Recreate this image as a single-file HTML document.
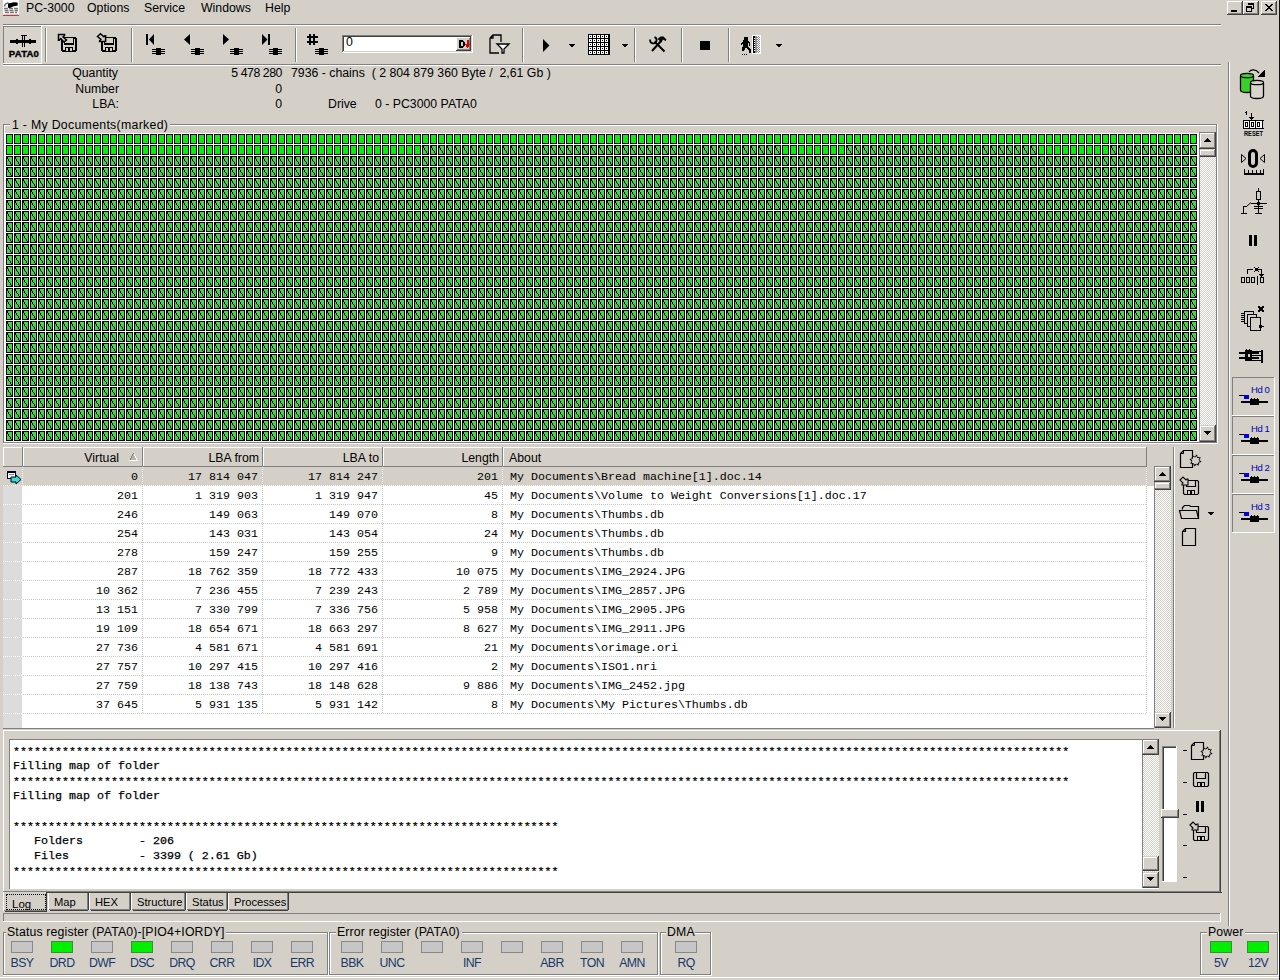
<!DOCTYPE html><html><head><meta charset="utf-8"><style>
html,body{margin:0;padding:0;}
body{width:1280px;height:980px;background:#d4d0c8;position:relative;overflow:hidden;font-family:"Liberation Sans",sans-serif;}
.t{position:absolute;white-space:pre;}
.b{position:absolute;}
.s{position:absolute;overflow:visible;}
.trk{background-color:#e8e6e2;background-image:repeating-conic-gradient(#ffffff 0 25%, #d4d0c8 0 50%);background-size:2px 2px;}
</style></head><body>
<svg class="s" style="left:3px;top:0px;" width="17" height="16" viewBox="0 0 17 16" shape-rendering="crispEdges"><rect x="0" y="0" width="16" height="14" fill="#fff"/><path d="M1.5 6.5c0-2 2-3.5 4-3.5" fill="none" stroke="#666" stroke-width="1.6" shape-rendering="auto"/><path d="M5 3.5L11 2.2 14.5 2.4 14.8 5.5 10 6.5 6.5 8.5 5 7.5z" fill="#000" shape-rendering="auto"/><path d="M1 8.5h14M1.5 10.5h13.5M2 12.5h12" stroke="#777" stroke-width="1.4" stroke-dasharray="4 1" shape-rendering="auto"/><rect x="0" y="15" width="16" height="1" fill="#c03838"/></svg><div class="t" style="left:26px;top:1.59px;font-size:12.3px;line-height:12.3px;font-family:'Liberation Sans', sans-serif;color:#000;">PC-3000</div><div class="t" style="left:87px;top:1.59px;font-size:12.3px;line-height:12.3px;font-family:'Liberation Sans', sans-serif;color:#000;">Options</div><div class="t" style="left:144px;top:1.59px;font-size:12.3px;line-height:12.3px;font-family:'Liberation Sans', sans-serif;color:#000;">Service</div><div class="t" style="left:201px;top:1.59px;font-size:12.3px;line-height:12.3px;font-family:'Liberation Sans', sans-serif;color:#000;">Windows</div><div class="t" style="left:265px;top:1.59px;font-size:12.3px;line-height:12.3px;font-family:'Liberation Sans', sans-serif;color:#000;">Help</div><div class="b" style="left:1227px;top:1px;width:16px;height:14px;background:#d4d0c8;"></div><div class="b" style="left:1227px;top:1px;width:16px;height:1px;background:#ffffff;"></div><div class="b" style="left:1227px;top:1px;width:1px;height:14px;background:#ffffff;"></div><div class="b" style="left:1227px;top:14px;width:16px;height:1px;background:#404040;"></div><div class="b" style="left:1242px;top:1px;width:1px;height:14px;background:#404040;"></div><div class="b" style="left:1228px;top:13px;width:14px;height:1px;background:#808080;"></div><div class="b" style="left:1241px;top:2px;width:1px;height:12px;background:#808080;"></div><div class="b" style="left:1231px;top:10px;width:6px;height:2px;background:#000;"></div><div class="b" style="left:1243px;top:1px;width:16px;height:14px;background:#d4d0c8;"></div><div class="b" style="left:1243px;top:1px;width:16px;height:1px;background:#ffffff;"></div><div class="b" style="left:1243px;top:1px;width:1px;height:14px;background:#ffffff;"></div><div class="b" style="left:1243px;top:14px;width:16px;height:1px;background:#404040;"></div><div class="b" style="left:1258px;top:1px;width:1px;height:14px;background:#404040;"></div><div class="b" style="left:1244px;top:13px;width:14px;height:1px;background:#808080;"></div><div class="b" style="left:1257px;top:2px;width:1px;height:12px;background:#808080;"></div><svg class="s" style="left:1246px;top:3px;" width="9" height="9" viewBox="0 0 9 9" shape-rendering="crispEdges"><path d="M2 0h6v2H2zM7 2h1v4H7zM6 5h1v1H6z" fill="#000"/><path d="M0 3h6v2H0zM0 5h1v4H0zM5 5h1v4H5zM0 8h6v1H0z" fill="#000"/></svg><div class="b" style="left:1261px;top:1px;width:16px;height:14px;background:#d4d0c8;"></div><div class="b" style="left:1261px;top:1px;width:16px;height:1px;background:#ffffff;"></div><div class="b" style="left:1261px;top:1px;width:1px;height:14px;background:#ffffff;"></div><div class="b" style="left:1261px;top:14px;width:16px;height:1px;background:#404040;"></div><div class="b" style="left:1276px;top:1px;width:1px;height:14px;background:#404040;"></div><div class="b" style="left:1262px;top:13px;width:14px;height:1px;background:#808080;"></div><div class="b" style="left:1275px;top:2px;width:1px;height:12px;background:#808080;"></div><svg class="s" style="left:1265px;top:4px;" width="8" height="7" viewBox="0 0 8 7" shape-rendering="crispEdges"><path d="M0 0h2v1h1v1h2V1h1V0h2v1H7v1H6v1H5v1h1v1h1v1h1v1H6V6H5V5H3v1H2v1H0V6h1V5h1V4h1V3H2V2H1V1H0z" fill="#000"/></svg><div class="b" style="left:1279px;top:0px;width:1px;height:980px;background:#101010;"></div><div class="b" style="left:3px;top:24px;width:1218px;height:1px;background:#808080;"></div><div class="b" style="left:3px;top:25px;width:1218px;height:1px;background:#ffffff;"></div><div class="b" style="left:3px;top:64px;width:1218px;height:1px;background:#808080;"></div><div class="b" style="left:3px;top:65px;width:1218px;height:1px;background:#ffffff;"></div><div class="b" style="left:3px;top:26px;width:39px;height:38px;background:#d8d4cc;"></div><div class="b" style="left:3px;top:26px;width:38px;height:1px;background:#808080;"></div><div class="b" style="left:3px;top:26px;width:1px;height:37px;background:#808080;"></div><div class="b" style="left:3px;top:63px;width:39px;height:1px;background:#ffffff;"></div><div class="b" style="left:41px;top:26px;width:1px;height:38px;background:#ffffff;"></div><svg class="s" style="left:9px;top:34px;" width="30" height="24" viewBox="0 0 30 24" shape-rendering="crispEdges"><path d="M1 6h26v3H1z M7 5h2v5H7z M20 5h2v5h-2z M12 1h6v1h-6z M13 1h1v12h-1z M15 1h1v12h-1z" fill="#000"/>
</svg><div class="t" style="left:4.0px;width:40px;text-align:center;top:48.87px;font-size:9.6px;line-height:9.6px;font-family:'Liberation Sans', sans-serif;color:#000;font-weight:bold;letter-spacing:0.2px;-webkit-text-stroke:0.35px #000;">PATA0</div><div class="b" style="left:45px;top:28px;width:1px;height:34px;background:#808080;"></div><div class="b" style="left:46px;top:28px;width:1px;height:34px;background:#ffffff;"></div><svg class="s" style="left:56px;top:33px;" width="24" height="22" viewBox="0 0 24 22" shape-rendering="crispEdges"><path d="M6 4h14v1h1v14h-1v1H6v-1H5V5h1z" fill="none" stroke="#000" stroke-width="0"/><path d="M6 4h14v1h1v13h-1v1H6v-1H5V5h1z M7 6v11h12V6z" fill="#000" fill-rule="evenodd"/><path d="M8 5h10v7H8z" fill="#000"/><path d="M9 5h8v5H9z" fill="#d4d0c8"/><path d="M9 14h8v4H9z" fill="#000"/><path d="M10 15h2v3H10z M14 15h2v3H14z" fill="#d4d0c8"/><path d="M2.5 1.5H8.5V2.5L7 4 10.5 7 8 9 4.8 5.6 3.3 7.3H2.5z" fill="#d4d0c8" stroke="#000" stroke-width="1.5" shape-rendering="auto"/></svg><svg class="s" style="left:95px;top:33px;" width="24" height="22" viewBox="0 0 24 22" shape-rendering="crispEdges"><path d="M7 4h14v1h1v14h-1v1H7v-1H6V5h1z" fill="none" stroke="#000" stroke-width="0"/><path d="M7 4h14v1h1v13h-1v1H7v-1H6V5h1z M8 6v11h12V6z" fill="#000" fill-rule="evenodd"/><path d="M9 5h10v7H9z" fill="#000"/><path d="M10 5h8v5H10z" fill="#d4d0c8"/><path d="M10 14h8v4H10z" fill="#000"/><path d="M11 15h2v3H11z M15 15h2v3H15z" fill="#d4d0c8"/><path d="M2.5 3.5L5.5 0.7 8.8 3.8 9.9 2.7H10.6V8.6H4.6V7.8L5.9 6.4z" fill="#d4d0c8" stroke="#000" stroke-width="1.5" shape-rendering="auto"/></svg><div class="b" style="left:131px;top:28px;width:1px;height:34px;background:#808080;"></div><div class="b" style="left:132px;top:28px;width:1px;height:34px;background:#ffffff;"></div><svg class="s" style="left:140px;top:30px;" width="40" height="28" viewBox="0 0 40 28" shape-rendering="crispEdges"><path d="M6 4h2v11H6z M9 9.5L14 4v11z" fill="#000" shape-rendering="auto"/><path d="M12 19h13v1H12z M12 21h13v1H12z M12 23h13v1H12z M16 18h5v7H16z" fill="#000"/></svg><svg class="s" style="left:179px;top:30px;" width="40" height="28" viewBox="0 0 40 28" shape-rendering="crispEdges"><path d="M5 9.5L11 4v11z" fill="#000" shape-rendering="auto"/><path d="M12 19h13v1H12z M12 21h13v1H12z M12 23h13v1H12z M16 18h5v7H16z" fill="#000"/></svg><svg class="s" style="left:218px;top:30px;" width="40" height="28" viewBox="0 0 40 28" shape-rendering="crispEdges"><path d="M5 4L11 9.5 5 15z" fill="#000" shape-rendering="auto"/><path d="M12 19h13v1H12z M12 21h13v1H12z M12 23h13v1H12z M16 18h5v7H16z" fill="#000"/></svg><svg class="s" style="left:257px;top:30px;" width="40" height="28" viewBox="0 0 40 28" shape-rendering="crispEdges"><path d="M5 4L10.5 9.5 5 15z M11 4h2v11h-2z" fill="#000" shape-rendering="auto"/><path d="M12 19h13v1H12z M12 21h13v1H12z M12 23h13v1H12z M16 18h5v7H16z" fill="#000"/></svg><div class="b" style="left:295px;top:28px;width:1px;height:34px;background:#808080;"></div><div class="b" style="left:296px;top:28px;width:1px;height:34px;background:#ffffff;"></div><svg class="s" style="left:300px;top:30px;" width="40" height="28" viewBox="0 0 40 28" shape-rendering="crispEdges"><path d="M9 4h2v11H9z M13 4h2v11h-2z M7 6h11v2H7z M7 11h11v2H7z" fill="#000"/><path d="M15 19h13v1H15z M15 21h13v1H15z M15 23h13v1H15z M19 18h5v7H19z" fill="#000"/></svg><div class="b" style="left:342px;top:35px;width:131px;height:18px;background:#ffffff;"></div><div class="b" style="left:342px;top:35px;width:131px;height:1px;background:#808080;"></div><div class="b" style="left:342px;top:35px;width:1px;height:18px;background:#808080;"></div><div class="b" style="left:343px;top:36px;width:129px;height:1px;background:#404040;"></div><div class="b" style="left:343px;top:36px;width:1px;height:16px;background:#404040;"></div><div class="b" style="left:342px;top:52px;width:131px;height:1px;background:#ffffff;"></div><div class="b" style="left:472px;top:35px;width:1px;height:18px;background:#ffffff;"></div><div class="b" style="left:343px;top:51px;width:129px;height:1px;background:#d4d0c8;"></div><div class="b" style="left:471px;top:36px;width:1px;height:16px;background:#d4d0c8;"></div><div class="t" style="left:346px;top:36.09px;font-size:12.3px;line-height:12.3px;font-family:'Liberation Sans', sans-serif;color:#000;">0</div><div class="b" style="left:456px;top:37px;width:15px;height:14px;background:#d4d0c8;"></div><div class="b" style="left:456px;top:37px;width:15px;height:1px;background:#ffffff;"></div><div class="b" style="left:456px;top:37px;width:1px;height:14px;background:#ffffff;"></div><div class="b" style="left:456px;top:50px;width:15px;height:1px;background:#404040;"></div><div class="b" style="left:470px;top:37px;width:1px;height:14px;background:#404040;"></div><div class="b" style="left:457px;top:49px;width:13px;height:1px;background:#808080;"></div><div class="b" style="left:469px;top:38px;width:1px;height:12px;background:#808080;"></div><svg class="s" style="left:459px;top:39px;" width="12" height="10" viewBox="0 0 12 10" shape-rendering="crispEdges"><path d="M0 1h4v1h1v1h1v4H5v1H4v1H0z M2 3v4h1.5V3z" fill="#000" fill-rule="evenodd"/><path d="M7.5 1h2v4h2L8.5 9 5.5 5h2z" fill="#e00000"/></svg><svg class="s" style="left:487px;top:34px;" width="26" height="22" viewBox="0 0 26 22" shape-rendering="crispEdges"><path d="M3 4l3-3h8v7 M3 4v15h9 M3 4h3V1" fill="none" stroke="#000" stroke-width="1.3" shape-rendering="auto"/><path d="M10 10h12l-5 5v4h-2v-4z" fill="#fff" stroke="#000" stroke-width="1.3" shape-rendering="auto" stroke-linejoin="miter"/></svg><div class="b" style="left:522px;top:28px;width:1px;height:34px;background:#808080;"></div><div class="b" style="left:523px;top:28px;width:1px;height:34px;background:#ffffff;"></div><svg class="s" style="left:540px;top:36px;" width="14" height="18" viewBox="0 0 14 18" shape-rendering="crispEdges"><path d="M3 3L9.5 9.5 3 16z" fill="#000" shape-rendering="auto"/></svg><svg class="s" style="left:569px;top:44px;" width="6" height="3" viewBox="0 0 6 3" shape-rendering="crispEdges"><path d="M0 0h6v1H5v1H4v1H2V2H1V1H0z" fill="#000"/></svg><svg class="s" style="left:588px;top:34px;" width="22" height="21" viewBox="0 0 22 21" shape-rendering="crispEdges"><rect x="0" y="0" width="22" height="21" fill="#000"/><rect x="1.3" y="1" width="3" height="3" fill="#fff"/><rect x="2" y="2" width="1" height="1" fill="#000"/><rect x="1.3" y="5" width="3" height="3" fill="#fff"/><rect x="2" y="6" width="1" height="1" fill="#000"/><rect x="1.3" y="9" width="3" height="3" fill="#fff"/><rect x="2" y="10" width="1" height="1" fill="#000"/><rect x="1.3" y="13" width="3" height="3" fill="#fff"/><rect x="2" y="14" width="1" height="1" fill="#000"/><rect x="1.3" y="17" width="3" height="3" fill="#fff"/><rect x="2" y="18" width="1" height="1" fill="#000"/><rect x="5.3" y="1" width="3" height="3" fill="#fff"/><rect x="6" y="2" width="1" height="1" fill="#000"/><rect x="5.3" y="5" width="3" height="3" fill="#fff"/><rect x="6" y="6" width="1" height="1" fill="#000"/><rect x="5.3" y="9" width="3" height="3" fill="#fff"/><rect x="6" y="10" width="1" height="1" fill="#000"/><rect x="5.3" y="13" width="3" height="3" fill="#fff"/><rect x="6" y="14" width="1" height="1" fill="#000"/><rect x="5.3" y="17" width="3" height="3" fill="#fff"/><rect x="6" y="18" width="1" height="1" fill="#000"/><rect x="9.3" y="1" width="3" height="3" fill="#fff"/><rect x="10" y="2" width="1" height="1" fill="#000"/><rect x="9.3" y="5" width="3" height="3" fill="#fff"/><rect x="10" y="6" width="1" height="1" fill="#000"/><rect x="9.3" y="9" width="3" height="3" fill="#fff"/><rect x="10" y="10" width="1" height="1" fill="#000"/><rect x="9.3" y="13" width="3" height="3" fill="#fff"/><rect x="10" y="14" width="1" height="1" fill="#000"/><rect x="9.3" y="17" width="3" height="3" fill="#fff"/><rect x="10" y="18" width="1" height="1" fill="#000"/><rect x="13.3" y="1" width="3" height="3" fill="#fff"/><rect x="14" y="2" width="1" height="1" fill="#000"/><rect x="13.3" y="5" width="3" height="3" fill="#fff"/><rect x="14" y="6" width="1" height="1" fill="#000"/><rect x="13.3" y="9" width="3" height="3" fill="#fff"/><rect x="14" y="10" width="1" height="1" fill="#000"/><rect x="13.3" y="13" width="3" height="3" fill="#fff"/><rect x="14" y="14" width="1" height="1" fill="#000"/><rect x="13.3" y="17" width="3" height="3" fill="#fff"/><rect x="14" y="18" width="1" height="1" fill="#000"/><rect x="17.3" y="1" width="3" height="3" fill="#fff"/><rect x="18" y="2" width="1" height="1" fill="#000"/><rect x="17.3" y="5" width="3" height="3" fill="#fff"/><rect x="18" y="6" width="1" height="1" fill="#000"/><rect x="17.3" y="9" width="3" height="3" fill="#fff"/><rect x="18" y="10" width="1" height="1" fill="#000"/><rect x="17.3" y="13" width="3" height="3" fill="#fff"/><rect x="18" y="14" width="1" height="1" fill="#000"/><rect x="17.3" y="17" width="3" height="3" fill="#fff"/><rect x="18" y="18" width="1" height="1" fill="#000"/></svg><svg class="s" style="left:622px;top:44px;" width="6" height="3" viewBox="0 0 6 3" shape-rendering="crispEdges"><path d="M0 0h6v1H5v1H4v1H2V2H1V1H0z" fill="#000"/></svg><div class="b" style="left:634px;top:28px;width:1px;height:34px;background:#808080;"></div><div class="b" style="left:635px;top:28px;width:1px;height:34px;background:#ffffff;"></div><svg class="s" style="left:649px;top:36px;" width="20" height="18" viewBox="0 0 20 18" shape-rendering="crispEdges"><path d="M5.5 5.5L15.5 15.5 M12 5L3 15" stroke="#000" stroke-width="2" fill="none" shape-rendering="auto"/><path d="M1.2 3.5A3.2 3.2 0 1 0 5.5 1.2" stroke="#000" stroke-width="1.8" fill="none" shape-rendering="auto"/><path d="M8.5 3L11.5 0.5H14.5L17.5 3.5 16.5 5 14 3.5 12.5 6.5z" fill="#000" shape-rendering="auto"/></svg><div class="b" style="left:681px;top:28px;width:1px;height:34px;background:#808080;"></div><div class="b" style="left:682px;top:28px;width:1px;height:34px;background:#ffffff;"></div><div class="b" style="left:700px;top:41px;width:10px;height:9px;background:#000;"></div><div class="b" style="left:728px;top:28px;width:1px;height:34px;background:#808080;"></div><div class="b" style="left:729px;top:28px;width:1px;height:34px;background:#ffffff;"></div><svg class="s" style="left:740px;top:34px;" width="24" height="22" viewBox="0 0 24 22" shape-rendering="crispEdges"><defs><pattern id="dth" width="2" height="2" patternUnits="userSpaceOnUse"><rect width="2" height="2" fill="#fff"/><rect width="1" height="1" fill="#888"/><rect x="1" y="1" width="1" height="1" fill="#888"/></pattern></defs>
<path d="M4 3h4v3H4z M3 6h5v1h1v1h1v4H9V9H8v4h1v1h1v1h1v4H9v-3H8v-1H7v-1H5v2H4v1H2v-4h1v-3H2v1H1V9h1V8h1z" fill="#000"/>
<path d="M2 20h1v1H2z M4 20h1v1H4z M6 20h1v1H6z" fill="#000"/>
<rect x="12" y="1" width="9" height="19" fill="#fff"/>
<rect x="13" y="2" width="2" height="17" fill="#000"/><rect x="15" y="2" width="2" height="17" fill="#909090"/><rect x="17" y="2" width="3" height="17" fill="url(#dth)"/>
<path d="M14 4h1v1h-1z M14 6h1v1h-1z M14 8h1v1h-1z M14 10h1v1h-1z M14 12h1v1h-1z M14 14h1v1h-1z M14 16h1v1h-1z" fill="#fff"/>
</svg><svg class="s" style="left:776px;top:44px;" width="6" height="3" viewBox="0 0 6 3" shape-rendering="crispEdges"><path d="M0 0h6v1H5v1H4v1H2V2H1V1H0z" fill="#000"/></svg><div class="t" style="left:-282px;width:400px;text-align:right;top:66.59px;font-size:12.3px;line-height:12.3px;font-family:'Liberation Sans', sans-serif;color:#000;">Quantity</div><div class="t" style="left:-281px;width:400px;text-align:right;top:82.59px;font-size:12.3px;line-height:12.3px;font-family:'Liberation Sans', sans-serif;color:#000;">Number</div><div class="t" style="left:-281px;width:400px;text-align:right;top:97.59px;font-size:12.3px;line-height:12.3px;font-family:'Liberation Sans', sans-serif;color:#000;">LBA:</div><div class="t" style="left:-118px;width:400px;text-align:right;top:66.59px;font-size:12.3px;line-height:12.3px;font-family:'Liberation Sans', sans-serif;color:#000;letter-spacing:-0.45px;">5 478 280</div><div class="t" style="left:-118px;width:400px;text-align:right;top:82.59px;font-size:12.3px;line-height:12.3px;font-family:'Liberation Sans', sans-serif;color:#000;">0</div><div class="t" style="left:-118px;width:400px;text-align:right;top:97.59px;font-size:12.3px;line-height:12.3px;font-family:'Liberation Sans', sans-serif;color:#000;">0</div><div class="t" style="left:291px;top:66.59px;font-size:12.3px;line-height:12.3px;font-family:'Liberation Sans', sans-serif;color:#000;">7936 - chains  ( 2 804 879 360 Byte /  2,61 Gb )</div><div class="t" style="left:328px;top:97.59px;font-size:12.3px;line-height:12.3px;font-family:'Liberation Sans', sans-serif;color:#000;">Drive</div><div class="t" style="left:375px;top:97.59px;font-size:12.3px;line-height:12.3px;font-family:'Liberation Sans', sans-serif;color:#000;">0 - PC3000 PATA0</div><div class="b" style="left:3px;top:124px;width:1214px;height:1px;background:#808080;"></div><div class="b" style="left:4px;top:125px;width:1212px;height:1px;background:#ffffff;"></div><div class="b" style="left:3px;top:124px;width:1px;height:319px;background:#808080;"></div><div class="b" style="left:4px;top:125px;width:1px;height:317px;background:#ffffff;"></div><div class="b" style="left:3px;top:442px;width:1214px;height:1px;background:#808080;"></div><div class="b" style="left:3px;top:443px;width:1215px;height:1px;background:#ffffff;"></div><div class="b" style="left:1216px;top:124px;width:1px;height:319px;background:#808080;"></div><div class="b" style="left:1217px;top:124px;width:1px;height:320px;background:#ffffff;"></div><div class="b" style="left:10px;top:117px;width:160px;height:14px;background:#d4d0c8;"></div><div class="t" style="left:12px;top:118.59px;font-size:12.3px;line-height:12.3px;font-family:'Liberation Sans', sans-serif;color:#000;letter-spacing:0.3px;">1 - My Documents(marked)</div><div class="b" style="left:5px;top:133px;width:1194px;height:309px;background:#ffffff;"></div><svg class="s" style="left:6px;top:134px;" width="1191" height="307" viewBox="0 0 1191 307" shape-rendering="crispEdges"><defs>
<pattern id="pp" x="0" y="0" width="8" height="11" patternUnits="userSpaceOnUse"><rect x="0" y="0" width="7" height="10" fill="#000"/><rect x="1" y="1" width="5" height="8" fill="#08f008"/></pattern>
<pattern id="pd" x="0" y="0" width="8" height="11" patternUnits="userSpaceOnUse"><rect x="0" y="0" width="7" height="10" fill="#000"/><rect x="1" y="1" width="5" height="8" fill="#40d840"/><path d="M1 1h1v2H1z M2 3h1v2H2z M3 5h1v1H3z M4 6h1v2H4z M5 8h1v1H5z" fill="#000"/></pattern>
</defs>
<rect x="0" y="0" width="1192" height="11" fill="url(#pp)"/>
<rect x="0" y="11" width="1192" height="11" fill="url(#pd)"/>
<rect x="0" y="11" width="416" height="11" fill="url(#pp)"/>
<rect x="776" y="11" width="64" height="11" fill="url(#pp)"/>
<rect x="1032" y="11" width="72" height="11" fill="url(#pp)"/>
<rect x="0" y="22" width="1192" height="286" fill="url(#pd)"/></svg><div class="b trk" style="left:1199px;top:132px;width:17px;height:310px;"></div><div class="b" style="left:1199px;top:132px;width:1px;height:310px;background:#808080;"></div><div class="b" style="left:1199px;top:132px;width:17px;height:17px;background:#d4d0c8;"></div><div class="b" style="left:1199px;top:132px;width:17px;height:1px;background:#808080;"></div><div class="b" style="left:1199px;top:132px;width:1px;height:17px;background:#808080;"></div><div class="b" style="left:1200px;top:133px;width:15px;height:1px;background:#ffffff;"></div><div class="b" style="left:1200px;top:133px;width:1px;height:15px;background:#ffffff;"></div><div class="b" style="left:1200px;top:147px;width:15px;height:1px;background:#808080;"></div><div class="b" style="left:1214px;top:133px;width:1px;height:15px;background:#808080;"></div><div class="b" style="left:1199px;top:148px;width:17px;height:1px;background:#404040;"></div><div class="b" style="left:1215px;top:132px;width:1px;height:17px;background:#404040;"></div><svg class="s" style="left:1204px;top:138px;" width="7" height="4" viewBox="0 0 7 4" shape-rendering="crispEdges"><path d="M3 0h1v1h1v1h1v1h1v1H0V3h1V2h1V1h1z" fill="#000"/></svg><div class="b" style="left:1199px;top:425px;width:17px;height:17px;background:#d4d0c8;"></div><div class="b" style="left:1200px;top:426px;width:15px;height:1px;background:#ffffff;"></div><div class="b" style="left:1200px;top:426px;width:1px;height:15px;background:#ffffff;"></div><div class="b" style="left:1200px;top:440px;width:15px;height:1px;background:#808080;"></div><div class="b" style="left:1214px;top:426px;width:1px;height:15px;background:#808080;"></div><div class="b" style="left:1199px;top:441px;width:17px;height:1px;background:#404040;"></div><div class="b" style="left:1215px;top:425px;width:1px;height:17px;background:#404040;"></div><svg class="s" style="left:1204px;top:431px;" width="7" height="4" viewBox="0 0 7 4" shape-rendering="crispEdges"><path d="M0 0h7v1h-1v1h-1v1h-1v1h-1V3H2V2H1V1H0z" fill="#000"/></svg><div class="b" style="left:1199px;top:425px;width:1px;height:17px;background:#808080;"></div><div class="b" style="left:1199px;top:149px;width:17px;height:8px;background:#d4d0c8;"></div><div class="b" style="left:1200px;top:150px;width:15px;height:1px;background:#ffffff;"></div><div class="b" style="left:1200px;top:150px;width:1px;height:6px;background:#ffffff;"></div><div class="b" style="left:1200px;top:155px;width:15px;height:1px;background:#808080;"></div><div class="b" style="left:1214px;top:150px;width:1px;height:6px;background:#808080;"></div><div class="b" style="left:1199px;top:156px;width:17px;height:1px;background:#404040;"></div><div class="b" style="left:1215px;top:149px;width:1px;height:8px;background:#404040;"></div><div class="b" style="left:1199px;top:149px;width:1px;height:8px;background:#808080;"></div><div class="b" style="left:3px;top:447px;width:1151px;height:282px;background:#ffffff;"></div><div class="b" style="left:3px;top:447px;width:20px;height:20px;background:#d4d0c8;"></div><div class="b" style="left:3px;top:447px;width:20px;height:1px;background:#ffffff;"></div><div class="b" style="left:3px;top:447px;width:1px;height:20px;background:#ffffff;"></div><div class="b" style="left:22px;top:447px;width:1px;height:20px;background:#808080;"></div><div class="b" style="left:23px;top:447px;width:120px;height:20px;background:#d4d0c8;"></div><div class="b" style="left:23px;top:447px;width:120px;height:1px;background:#ffffff;"></div><div class="b" style="left:23px;top:447px;width:1px;height:20px;background:#ffffff;"></div><div class="b" style="left:142px;top:447px;width:1px;height:20px;background:#808080;"></div><div class="b" style="left:143px;top:447px;width:120px;height:20px;background:#d4d0c8;"></div><div class="b" style="left:143px;top:447px;width:120px;height:1px;background:#ffffff;"></div><div class="b" style="left:143px;top:447px;width:1px;height:20px;background:#ffffff;"></div><div class="b" style="left:262px;top:447px;width:1px;height:20px;background:#808080;"></div><div class="b" style="left:263px;top:447px;width:120px;height:20px;background:#d4d0c8;"></div><div class="b" style="left:263px;top:447px;width:120px;height:1px;background:#ffffff;"></div><div class="b" style="left:263px;top:447px;width:1px;height:20px;background:#ffffff;"></div><div class="b" style="left:382px;top:447px;width:1px;height:20px;background:#808080;"></div><div class="b" style="left:383px;top:447px;width:120px;height:20px;background:#d4d0c8;"></div><div class="b" style="left:383px;top:447px;width:120px;height:1px;background:#ffffff;"></div><div class="b" style="left:383px;top:447px;width:1px;height:20px;background:#ffffff;"></div><div class="b" style="left:502px;top:447px;width:1px;height:20px;background:#808080;"></div><div class="b" style="left:503px;top:447px;width:644px;height:20px;background:#d4d0c8;"></div><div class="b" style="left:503px;top:447px;width:644px;height:1px;background:#ffffff;"></div><div class="b" style="left:503px;top:447px;width:1px;height:20px;background:#ffffff;"></div><div class="b" style="left:1146px;top:447px;width:1px;height:20px;background:#808080;"></div><div class="b" style="left:3px;top:466px;width:1144px;height:1px;background:#808080;"></div><div class="b" style="left:1147px;top:447px;width:7px;height:20px;background:#d4d0c8;"></div><div class="t" style="left:-281px;width:400px;text-align:right;top:451.59px;font-size:12.3px;line-height:12.3px;font-family:'Liberation Sans', sans-serif;color:#000;">Virtual</div><div class="t" style="left:-141px;width:400px;text-align:right;top:451.59px;font-size:12.3px;line-height:12.3px;font-family:'Liberation Sans', sans-serif;color:#000;">LBA from</div><div class="t" style="left:-21px;width:400px;text-align:right;top:451.59px;font-size:12.3px;line-height:12.3px;font-family:'Liberation Sans', sans-serif;color:#000;">LBA to</div><div class="t" style="left:99px;width:400px;text-align:right;top:451.59px;font-size:12.3px;line-height:12.3px;font-family:'Liberation Sans', sans-serif;color:#000;">Length</div><div class="t" style="left:509px;top:451.59px;font-size:12.3px;line-height:12.3px;font-family:'Liberation Sans', sans-serif;color:#000;">About</div><svg class="s" style="left:129px;top:453px;" width="9" height="8" viewBox="0 0 9 8" shape-rendering="crispEdges"><path d="M4 0h1v1h1v2h1v2h1v2H1V5h1V3h1V1h1z" fill="#b8b4ac"/><path d="M4 0h1v1H4zM3 1h1v2H3zM2 3h1v2H2zM1 5h1v2H1z" fill="#808080"/><path d="M0 7h9v1H0zM5 1h1v2H5zM6 3h1v2H6zM7 5h1v2H7z" fill="#ffffff"/></svg><div class="b" style="left:3px;top:467px;width:19px;height:261px;background:#dcdcdc;"></div><div class="b" style="left:3px;top:467px;width:1144px;height:19px;background:#d4d0c8;"></div><div class="b" style="left:1147px;top:447px;width:7px;height:39px;background:#d4d0c8;"></div><div class="b" style="left:3px;top:485px;width:1144px;height:1px;background:repeating-linear-gradient(90deg,#ffffff 0 1px,transparent 1px 2px);"></div><div class="b" style="left:3px;top:485px;width:19px;height:1px;background:repeating-linear-gradient(90deg,#ffffff 0 1px,transparent 1px 2px);"></div><div class="b" style="left:3px;top:504px;width:1144px;height:1px;background:repeating-linear-gradient(90deg,#c8c8c8 0 1px,transparent 1px 2px);"></div><div class="b" style="left:3px;top:504px;width:19px;height:1px;background:repeating-linear-gradient(90deg,#ffffff 0 1px,transparent 1px 2px);"></div><div class="b" style="left:3px;top:523px;width:1144px;height:1px;background:repeating-linear-gradient(90deg,#c8c8c8 0 1px,transparent 1px 2px);"></div><div class="b" style="left:3px;top:523px;width:19px;height:1px;background:repeating-linear-gradient(90deg,#ffffff 0 1px,transparent 1px 2px);"></div><div class="b" style="left:3px;top:542px;width:1144px;height:1px;background:repeating-linear-gradient(90deg,#c8c8c8 0 1px,transparent 1px 2px);"></div><div class="b" style="left:3px;top:542px;width:19px;height:1px;background:repeating-linear-gradient(90deg,#ffffff 0 1px,transparent 1px 2px);"></div><div class="b" style="left:3px;top:561px;width:1144px;height:1px;background:repeating-linear-gradient(90deg,#c8c8c8 0 1px,transparent 1px 2px);"></div><div class="b" style="left:3px;top:561px;width:19px;height:1px;background:repeating-linear-gradient(90deg,#ffffff 0 1px,transparent 1px 2px);"></div><div class="b" style="left:3px;top:580px;width:1144px;height:1px;background:repeating-linear-gradient(90deg,#c8c8c8 0 1px,transparent 1px 2px);"></div><div class="b" style="left:3px;top:580px;width:19px;height:1px;background:repeating-linear-gradient(90deg,#ffffff 0 1px,transparent 1px 2px);"></div><div class="b" style="left:3px;top:599px;width:1144px;height:1px;background:repeating-linear-gradient(90deg,#c8c8c8 0 1px,transparent 1px 2px);"></div><div class="b" style="left:3px;top:599px;width:19px;height:1px;background:repeating-linear-gradient(90deg,#ffffff 0 1px,transparent 1px 2px);"></div><div class="b" style="left:3px;top:618px;width:1144px;height:1px;background:repeating-linear-gradient(90deg,#c8c8c8 0 1px,transparent 1px 2px);"></div><div class="b" style="left:3px;top:618px;width:19px;height:1px;background:repeating-linear-gradient(90deg,#ffffff 0 1px,transparent 1px 2px);"></div><div class="b" style="left:3px;top:637px;width:1144px;height:1px;background:repeating-linear-gradient(90deg,#c8c8c8 0 1px,transparent 1px 2px);"></div><div class="b" style="left:3px;top:637px;width:19px;height:1px;background:repeating-linear-gradient(90deg,#ffffff 0 1px,transparent 1px 2px);"></div><div class="b" style="left:3px;top:656px;width:1144px;height:1px;background:repeating-linear-gradient(90deg,#c8c8c8 0 1px,transparent 1px 2px);"></div><div class="b" style="left:3px;top:656px;width:19px;height:1px;background:repeating-linear-gradient(90deg,#ffffff 0 1px,transparent 1px 2px);"></div><div class="b" style="left:3px;top:675px;width:1144px;height:1px;background:repeating-linear-gradient(90deg,#c8c8c8 0 1px,transparent 1px 2px);"></div><div class="b" style="left:3px;top:675px;width:19px;height:1px;background:repeating-linear-gradient(90deg,#ffffff 0 1px,transparent 1px 2px);"></div><div class="b" style="left:3px;top:694px;width:1144px;height:1px;background:repeating-linear-gradient(90deg,#c8c8c8 0 1px,transparent 1px 2px);"></div><div class="b" style="left:3px;top:694px;width:19px;height:1px;background:repeating-linear-gradient(90deg,#ffffff 0 1px,transparent 1px 2px);"></div><div class="b" style="left:3px;top:713px;width:1144px;height:1px;background:repeating-linear-gradient(90deg,#c8c8c8 0 1px,transparent 1px 2px);"></div><div class="b" style="left:3px;top:713px;width:19px;height:1px;background:repeating-linear-gradient(90deg,#ffffff 0 1px,transparent 1px 2px);"></div><div class="b" style="left:22px;top:467px;width:1px;height:18px;background:repeating-linear-gradient(180deg,#ffffff 0 1px,transparent 1px 2px);"></div><div class="b" style="left:22px;top:486px;width:1px;height:228px;background:repeating-linear-gradient(180deg,#ffffff 0 1px,transparent 1px 2px);"></div><div class="b" style="left:142px;top:467px;width:1px;height:18px;background:repeating-linear-gradient(180deg,#ffffff 0 1px,transparent 1px 2px);"></div><div class="b" style="left:142px;top:486px;width:1px;height:228px;background:repeating-linear-gradient(180deg,#c8c8c8 0 1px,transparent 1px 2px);"></div><div class="b" style="left:262px;top:467px;width:1px;height:18px;background:repeating-linear-gradient(180deg,#ffffff 0 1px,transparent 1px 2px);"></div><div class="b" style="left:262px;top:486px;width:1px;height:228px;background:repeating-linear-gradient(180deg,#c8c8c8 0 1px,transparent 1px 2px);"></div><div class="b" style="left:382px;top:467px;width:1px;height:18px;background:repeating-linear-gradient(180deg,#ffffff 0 1px,transparent 1px 2px);"></div><div class="b" style="left:382px;top:486px;width:1px;height:228px;background:repeating-linear-gradient(180deg,#c8c8c8 0 1px,transparent 1px 2px);"></div><div class="b" style="left:502px;top:467px;width:1px;height:18px;background:repeating-linear-gradient(180deg,#ffffff 0 1px,transparent 1px 2px);"></div><div class="b" style="left:502px;top:486px;width:1px;height:228px;background:repeating-linear-gradient(180deg,#c8c8c8 0 1px,transparent 1px 2px);"></div><div class="b" style="left:1146px;top:467px;width:1px;height:19px;background:repeating-linear-gradient(180deg,#ffffff 0 1px,transparent 1px 2px);"></div><div class="b" style="left:1146px;top:486px;width:1px;height:228px;background:repeating-linear-gradient(180deg,#c8c8c8 0 1px,transparent 1px 2px);"></div><div class="t" style="left:-262px;width:400px;text-align:right;top:472.05px;font-size:11.67px;line-height:11.67px;font-family:'Liberation Mono', monospace;color:#000;">0</div><div class="t" style="left:-142px;width:400px;text-align:right;top:472.05px;font-size:11.67px;line-height:11.67px;font-family:'Liberation Mono', monospace;color:#000;">17 814 047</div><div class="t" style="left:-22px;width:400px;text-align:right;top:472.05px;font-size:11.67px;line-height:11.67px;font-family:'Liberation Mono', monospace;color:#000;">17 814 247</div><div class="t" style="left:98px;width:400px;text-align:right;top:472.05px;font-size:11.67px;line-height:11.67px;font-family:'Liberation Mono', monospace;color:#000;">201</div><div class="t" style="left:510px;top:472.05px;font-size:11.67px;line-height:11.67px;font-family:'Liberation Mono', monospace;color:#000;">My Documents\Bread machine[1].doc.14</div><div class="t" style="left:-262px;width:400px;text-align:right;top:491.05px;font-size:11.67px;line-height:11.67px;font-family:'Liberation Mono', monospace;color:#000;">201</div><div class="t" style="left:-142px;width:400px;text-align:right;top:491.05px;font-size:11.67px;line-height:11.67px;font-family:'Liberation Mono', monospace;color:#000;">1 319 903</div><div class="t" style="left:-22px;width:400px;text-align:right;top:491.05px;font-size:11.67px;line-height:11.67px;font-family:'Liberation Mono', monospace;color:#000;">1 319 947</div><div class="t" style="left:98px;width:400px;text-align:right;top:491.05px;font-size:11.67px;line-height:11.67px;font-family:'Liberation Mono', monospace;color:#000;">45</div><div class="t" style="left:510px;top:491.05px;font-size:11.67px;line-height:11.67px;font-family:'Liberation Mono', monospace;color:#000;">My Documents\Volume to Weight Conversions[1].doc.17</div><div class="t" style="left:-262px;width:400px;text-align:right;top:510.05px;font-size:11.67px;line-height:11.67px;font-family:'Liberation Mono', monospace;color:#000;">246</div><div class="t" style="left:-142px;width:400px;text-align:right;top:510.05px;font-size:11.67px;line-height:11.67px;font-family:'Liberation Mono', monospace;color:#000;">149 063</div><div class="t" style="left:-22px;width:400px;text-align:right;top:510.05px;font-size:11.67px;line-height:11.67px;font-family:'Liberation Mono', monospace;color:#000;">149 070</div><div class="t" style="left:98px;width:400px;text-align:right;top:510.05px;font-size:11.67px;line-height:11.67px;font-family:'Liberation Mono', monospace;color:#000;">8</div><div class="t" style="left:510px;top:510.05px;font-size:11.67px;line-height:11.67px;font-family:'Liberation Mono', monospace;color:#000;">My Documents\Thumbs.db</div><div class="t" style="left:-262px;width:400px;text-align:right;top:529.05px;font-size:11.67px;line-height:11.67px;font-family:'Liberation Mono', monospace;color:#000;">254</div><div class="t" style="left:-142px;width:400px;text-align:right;top:529.05px;font-size:11.67px;line-height:11.67px;font-family:'Liberation Mono', monospace;color:#000;">143 031</div><div class="t" style="left:-22px;width:400px;text-align:right;top:529.05px;font-size:11.67px;line-height:11.67px;font-family:'Liberation Mono', monospace;color:#000;">143 054</div><div class="t" style="left:98px;width:400px;text-align:right;top:529.05px;font-size:11.67px;line-height:11.67px;font-family:'Liberation Mono', monospace;color:#000;">24</div><div class="t" style="left:510px;top:529.05px;font-size:11.67px;line-height:11.67px;font-family:'Liberation Mono', monospace;color:#000;">My Documents\Thumbs.db</div><div class="t" style="left:-262px;width:400px;text-align:right;top:548.05px;font-size:11.67px;line-height:11.67px;font-family:'Liberation Mono', monospace;color:#000;">278</div><div class="t" style="left:-142px;width:400px;text-align:right;top:548.05px;font-size:11.67px;line-height:11.67px;font-family:'Liberation Mono', monospace;color:#000;">159 247</div><div class="t" style="left:-22px;width:400px;text-align:right;top:548.05px;font-size:11.67px;line-height:11.67px;font-family:'Liberation Mono', monospace;color:#000;">159 255</div><div class="t" style="left:98px;width:400px;text-align:right;top:548.05px;font-size:11.67px;line-height:11.67px;font-family:'Liberation Mono', monospace;color:#000;">9</div><div class="t" style="left:510px;top:548.05px;font-size:11.67px;line-height:11.67px;font-family:'Liberation Mono', monospace;color:#000;">My Documents\Thumbs.db</div><div class="t" style="left:-262px;width:400px;text-align:right;top:567.05px;font-size:11.67px;line-height:11.67px;font-family:'Liberation Mono', monospace;color:#000;">287</div><div class="t" style="left:-142px;width:400px;text-align:right;top:567.05px;font-size:11.67px;line-height:11.67px;font-family:'Liberation Mono', monospace;color:#000;">18 762 359</div><div class="t" style="left:-22px;width:400px;text-align:right;top:567.05px;font-size:11.67px;line-height:11.67px;font-family:'Liberation Mono', monospace;color:#000;">18 772 433</div><div class="t" style="left:98px;width:400px;text-align:right;top:567.05px;font-size:11.67px;line-height:11.67px;font-family:'Liberation Mono', monospace;color:#000;">10 075</div><div class="t" style="left:510px;top:567.05px;font-size:11.67px;line-height:11.67px;font-family:'Liberation Mono', monospace;color:#000;">My Documents\IMG_2924.JPG</div><div class="t" style="left:-262px;width:400px;text-align:right;top:586.05px;font-size:11.67px;line-height:11.67px;font-family:'Liberation Mono', monospace;color:#000;">10 362</div><div class="t" style="left:-142px;width:400px;text-align:right;top:586.05px;font-size:11.67px;line-height:11.67px;font-family:'Liberation Mono', monospace;color:#000;">7 236 455</div><div class="t" style="left:-22px;width:400px;text-align:right;top:586.05px;font-size:11.67px;line-height:11.67px;font-family:'Liberation Mono', monospace;color:#000;">7 239 243</div><div class="t" style="left:98px;width:400px;text-align:right;top:586.05px;font-size:11.67px;line-height:11.67px;font-family:'Liberation Mono', monospace;color:#000;">2 789</div><div class="t" style="left:510px;top:586.05px;font-size:11.67px;line-height:11.67px;font-family:'Liberation Mono', monospace;color:#000;">My Documents\IMG_2857.JPG</div><div class="t" style="left:-262px;width:400px;text-align:right;top:605.05px;font-size:11.67px;line-height:11.67px;font-family:'Liberation Mono', monospace;color:#000;">13 151</div><div class="t" style="left:-142px;width:400px;text-align:right;top:605.05px;font-size:11.67px;line-height:11.67px;font-family:'Liberation Mono', monospace;color:#000;">7 330 799</div><div class="t" style="left:-22px;width:400px;text-align:right;top:605.05px;font-size:11.67px;line-height:11.67px;font-family:'Liberation Mono', monospace;color:#000;">7 336 756</div><div class="t" style="left:98px;width:400px;text-align:right;top:605.05px;font-size:11.67px;line-height:11.67px;font-family:'Liberation Mono', monospace;color:#000;">5 958</div><div class="t" style="left:510px;top:605.05px;font-size:11.67px;line-height:11.67px;font-family:'Liberation Mono', monospace;color:#000;">My Documents\IMG_2905.JPG</div><div class="t" style="left:-262px;width:400px;text-align:right;top:624.05px;font-size:11.67px;line-height:11.67px;font-family:'Liberation Mono', monospace;color:#000;">19 109</div><div class="t" style="left:-142px;width:400px;text-align:right;top:624.05px;font-size:11.67px;line-height:11.67px;font-family:'Liberation Mono', monospace;color:#000;">18 654 671</div><div class="t" style="left:-22px;width:400px;text-align:right;top:624.05px;font-size:11.67px;line-height:11.67px;font-family:'Liberation Mono', monospace;color:#000;">18 663 297</div><div class="t" style="left:98px;width:400px;text-align:right;top:624.05px;font-size:11.67px;line-height:11.67px;font-family:'Liberation Mono', monospace;color:#000;">8 627</div><div class="t" style="left:510px;top:624.05px;font-size:11.67px;line-height:11.67px;font-family:'Liberation Mono', monospace;color:#000;">My Documents\IMG_2911.JPG</div><div class="t" style="left:-262px;width:400px;text-align:right;top:643.05px;font-size:11.67px;line-height:11.67px;font-family:'Liberation Mono', monospace;color:#000;">27 736</div><div class="t" style="left:-142px;width:400px;text-align:right;top:643.05px;font-size:11.67px;line-height:11.67px;font-family:'Liberation Mono', monospace;color:#000;">4 581 671</div><div class="t" style="left:-22px;width:400px;text-align:right;top:643.05px;font-size:11.67px;line-height:11.67px;font-family:'Liberation Mono', monospace;color:#000;">4 581 691</div><div class="t" style="left:98px;width:400px;text-align:right;top:643.05px;font-size:11.67px;line-height:11.67px;font-family:'Liberation Mono', monospace;color:#000;">21</div><div class="t" style="left:510px;top:643.05px;font-size:11.67px;line-height:11.67px;font-family:'Liberation Mono', monospace;color:#000;">My Documents\orimage.ori</div><div class="t" style="left:-262px;width:400px;text-align:right;top:662.05px;font-size:11.67px;line-height:11.67px;font-family:'Liberation Mono', monospace;color:#000;">27 757</div><div class="t" style="left:-142px;width:400px;text-align:right;top:662.05px;font-size:11.67px;line-height:11.67px;font-family:'Liberation Mono', monospace;color:#000;">10 297 415</div><div class="t" style="left:-22px;width:400px;text-align:right;top:662.05px;font-size:11.67px;line-height:11.67px;font-family:'Liberation Mono', monospace;color:#000;">10 297 416</div><div class="t" style="left:98px;width:400px;text-align:right;top:662.05px;font-size:11.67px;line-height:11.67px;font-family:'Liberation Mono', monospace;color:#000;">2</div><div class="t" style="left:510px;top:662.05px;font-size:11.67px;line-height:11.67px;font-family:'Liberation Mono', monospace;color:#000;">My Documents\ISO1.nri</div><div class="t" style="left:-262px;width:400px;text-align:right;top:681.05px;font-size:11.67px;line-height:11.67px;font-family:'Liberation Mono', monospace;color:#000;">27 759</div><div class="t" style="left:-142px;width:400px;text-align:right;top:681.05px;font-size:11.67px;line-height:11.67px;font-family:'Liberation Mono', monospace;color:#000;">18 138 743</div><div class="t" style="left:-22px;width:400px;text-align:right;top:681.05px;font-size:11.67px;line-height:11.67px;font-family:'Liberation Mono', monospace;color:#000;">18 148 628</div><div class="t" style="left:98px;width:400px;text-align:right;top:681.05px;font-size:11.67px;line-height:11.67px;font-family:'Liberation Mono', monospace;color:#000;">9 886</div><div class="t" style="left:510px;top:681.05px;font-size:11.67px;line-height:11.67px;font-family:'Liberation Mono', monospace;color:#000;">My Documents\IMG_2452.jpg</div><div class="t" style="left:-262px;width:400px;text-align:right;top:700.05px;font-size:11.67px;line-height:11.67px;font-family:'Liberation Mono', monospace;color:#000;">37 645</div><div class="t" style="left:-142px;width:400px;text-align:right;top:700.05px;font-size:11.67px;line-height:11.67px;font-family:'Liberation Mono', monospace;color:#000;">5 931 135</div><div class="t" style="left:-22px;width:400px;text-align:right;top:700.05px;font-size:11.67px;line-height:11.67px;font-family:'Liberation Mono', monospace;color:#000;">5 931 142</div><div class="t" style="left:98px;width:400px;text-align:right;top:700.05px;font-size:11.67px;line-height:11.67px;font-family:'Liberation Mono', monospace;color:#000;">8</div><div class="t" style="left:510px;top:700.05px;font-size:11.67px;line-height:11.67px;font-family:'Liberation Mono', monospace;color:#000;">My Documents\My Pictures\Thumbs.db</div><svg class="s" style="left:6px;top:470px;" width="18" height="16" viewBox="0 0 18 16" shape-rendering="crispEdges"><rect x="1" y="1" width="9" height="8" fill="#000040"/><rect x="2" y="3" width="7" height="5" fill="#fff"/><rect x="3" y="4" width="5" height="1" fill="#8080a0"/><path d="M5 7h5V5l5 4.5-5 4.5v-2H5z" fill="#30e0e0" stroke="#000" stroke-width="1" shape-rendering="auto"/></svg><div class="b" style="left:3px;top:728px;width:1151px;height:1px;background:#808080;"></div><div class="b trk" style="left:1154px;top:466px;width:17px;height:262px;"></div><div class="b" style="left:1154px;top:466px;width:1px;height:262px;background:#808080;"></div><div class="b" style="left:1154px;top:466px;width:17px;height:16px;background:#d4d0c8;"></div><div class="b" style="left:1154px;top:466px;width:17px;height:1px;background:#808080;"></div><div class="b" style="left:1154px;top:466px;width:1px;height:16px;background:#808080;"></div><div class="b" style="left:1155px;top:467px;width:15px;height:1px;background:#ffffff;"></div><div class="b" style="left:1155px;top:467px;width:1px;height:14px;background:#ffffff;"></div><div class="b" style="left:1155px;top:480px;width:15px;height:1px;background:#808080;"></div><div class="b" style="left:1169px;top:467px;width:1px;height:14px;background:#808080;"></div><div class="b" style="left:1154px;top:481px;width:17px;height:1px;background:#404040;"></div><div class="b" style="left:1170px;top:466px;width:1px;height:16px;background:#404040;"></div><svg class="s" style="left:1159px;top:472px;" width="7" height="4" viewBox="0 0 7 4" shape-rendering="crispEdges"><path d="M3 0h1v1h1v1h1v1h1v1H0V3h1V2h1V1h1z" fill="#000"/></svg><div class="b" style="left:1154px;top:712px;width:17px;height:16px;background:#d4d0c8;"></div><div class="b" style="left:1155px;top:713px;width:15px;height:1px;background:#ffffff;"></div><div class="b" style="left:1155px;top:713px;width:1px;height:14px;background:#ffffff;"></div><div class="b" style="left:1155px;top:726px;width:15px;height:1px;background:#808080;"></div><div class="b" style="left:1169px;top:713px;width:1px;height:14px;background:#808080;"></div><div class="b" style="left:1154px;top:727px;width:17px;height:1px;background:#404040;"></div><div class="b" style="left:1170px;top:712px;width:1px;height:16px;background:#404040;"></div><svg class="s" style="left:1159px;top:717px;" width="7" height="4" viewBox="0 0 7 4" shape-rendering="crispEdges"><path d="M0 0h7v1h-1v1h-1v1h-1v1h-1V3H2V2H1V1H0z" fill="#000"/></svg><div class="b" style="left:1154px;top:712px;width:1px;height:16px;background:#808080;"></div><div class="b" style="left:1154px;top:482px;width:17px;height:8px;background:#d4d0c8;"></div><div class="b" style="left:1155px;top:483px;width:15px;height:1px;background:#ffffff;"></div><div class="b" style="left:1155px;top:483px;width:1px;height:6px;background:#ffffff;"></div><div class="b" style="left:1155px;top:488px;width:15px;height:1px;background:#808080;"></div><div class="b" style="left:1169px;top:483px;width:1px;height:6px;background:#808080;"></div><div class="b" style="left:1154px;top:489px;width:17px;height:1px;background:#404040;"></div><div class="b" style="left:1170px;top:482px;width:1px;height:8px;background:#404040;"></div><div class="b" style="left:1154px;top:482px;width:1px;height:8px;background:#808080;"></div><div class="b" style="left:3px;top:730px;width:1218px;height:1px;background:#ffffff;"></div><div class="b" style="left:3px;top:730px;width:1px;height:162px;background:#ffffff;"></div><div class="b" style="left:3px;top:891px;width:1218px;height:1px;background:#808080;"></div><div class="b" style="left:3px;top:892px;width:1219px;height:1px;background:#404040;"></div><div class="b" style="left:1220px;top:730px;width:1px;height:163px;background:#404040;"></div><div class="b" style="left:1219px;top:731px;width:1px;height:161px;background:#808080;"></div><div class="b" style="left:9px;top:739px;width:1150px;height:150px;background:#ffffff;"></div><div class="b" style="left:9px;top:739px;width:1150px;height:1px;background:#808080;"></div><div class="b" style="left:9px;top:739px;width:1px;height:150px;background:#808080;"></div><div class="b trk" style="left:1142px;top:739px;width:17px;height:149px;"></div><div class="b" style="left:1142px;top:739px;width:1px;height:149px;background:#808080;"></div><div class="b" style="left:1142px;top:739px;width:17px;height:16px;background:#d4d0c8;"></div><div class="b" style="left:1142px;top:739px;width:17px;height:1px;background:#808080;"></div><div class="b" style="left:1142px;top:739px;width:1px;height:16px;background:#808080;"></div><div class="b" style="left:1143px;top:740px;width:15px;height:1px;background:#ffffff;"></div><div class="b" style="left:1143px;top:740px;width:1px;height:14px;background:#ffffff;"></div><div class="b" style="left:1143px;top:753px;width:15px;height:1px;background:#808080;"></div><div class="b" style="left:1157px;top:740px;width:1px;height:14px;background:#808080;"></div><div class="b" style="left:1142px;top:754px;width:17px;height:1px;background:#404040;"></div><div class="b" style="left:1158px;top:739px;width:1px;height:16px;background:#404040;"></div><svg class="s" style="left:1147px;top:745px;" width="7" height="4" viewBox="0 0 7 4" shape-rendering="crispEdges"><path d="M3 0h1v1h1v1h1v1h1v1H0V3h1V2h1V1h1z" fill="#000"/></svg><div class="b" style="left:1142px;top:872px;width:17px;height:16px;background:#d4d0c8;"></div><div class="b" style="left:1143px;top:873px;width:15px;height:1px;background:#ffffff;"></div><div class="b" style="left:1143px;top:873px;width:1px;height:14px;background:#ffffff;"></div><div class="b" style="left:1143px;top:886px;width:15px;height:1px;background:#808080;"></div><div class="b" style="left:1157px;top:873px;width:1px;height:14px;background:#808080;"></div><div class="b" style="left:1142px;top:887px;width:17px;height:1px;background:#404040;"></div><div class="b" style="left:1158px;top:872px;width:1px;height:16px;background:#404040;"></div><svg class="s" style="left:1147px;top:877px;" width="7" height="4" viewBox="0 0 7 4" shape-rendering="crispEdges"><path d="M0 0h7v1h-1v1h-1v1h-1v1h-1V3H2V2H1V1H0z" fill="#000"/></svg><div class="b" style="left:1142px;top:872px;width:1px;height:16px;background:#808080;"></div><div class="b" style="left:1142px;top:856px;width:17px;height:15px;background:#d4d0c8;"></div><div class="b" style="left:1143px;top:857px;width:15px;height:1px;background:#ffffff;"></div><div class="b" style="left:1143px;top:857px;width:1px;height:13px;background:#ffffff;"></div><div class="b" style="left:1143px;top:869px;width:15px;height:1px;background:#808080;"></div><div class="b" style="left:1157px;top:857px;width:1px;height:13px;background:#808080;"></div><div class="b" style="left:1142px;top:870px;width:17px;height:1px;background:#404040;"></div><div class="b" style="left:1158px;top:856px;width:1px;height:15px;background:#404040;"></div><div class="b" style="left:1142px;top:856px;width:1px;height:15px;background:#808080;"></div><div class="t" style="left:13px;top:747.05px;font-size:11.67px;line-height:11.67px;font-family:'Liberation Mono', monospace;color:#000;-webkit-text-stroke:0.25px #000;">*******************************************************************************************************************************************************</div><div class="t" style="left:13px;top:761.05px;font-size:11.67px;line-height:11.67px;font-family:'Liberation Mono', monospace;color:#000;-webkit-text-stroke:0.25px #000;">Filling map of folder</div><div class="t" style="left:13px;top:777.05px;font-size:11.67px;line-height:11.67px;font-family:'Liberation Mono', monospace;color:#000;-webkit-text-stroke:0.25px #000;">*******************************************************************************************************************************************************</div><div class="t" style="left:13px;top:791.05px;font-size:11.67px;line-height:11.67px;font-family:'Liberation Mono', monospace;color:#000;-webkit-text-stroke:0.25px #000;">Filling map of folder</div><div class="t" style="left:13px;top:822.05px;font-size:11.67px;line-height:11.67px;font-family:'Liberation Mono', monospace;color:#000;-webkit-text-stroke:0.25px #000;">******************************************************************************</div><div class="t" style="left:13px;top:836.05px;font-size:11.67px;line-height:11.67px;font-family:'Liberation Mono', monospace;color:#000;-webkit-text-stroke:0.25px #000;">   Folders        - 206</div><div class="t" style="left:13px;top:851.05px;font-size:11.67px;line-height:11.67px;font-family:'Liberation Mono', monospace;color:#000;-webkit-text-stroke:0.25px #000;">   Files          - 3399 ( 2.61 Gb)</div><div class="t" style="left:13px;top:867.05px;font-size:11.67px;line-height:11.67px;font-family:'Liberation Mono', monospace;color:#000;-webkit-text-stroke:0.25px #000;">******************************************************************************</div><div class="b" style="left:1162px;top:746px;width:15px;height:136px;background:#ffffff;"></div><div class="b" style="left:1162px;top:746px;width:15px;height:1px;background:#808080;"></div><div class="b" style="left:1162px;top:746px;width:1px;height:136px;background:#808080;"></div><div class="b" style="left:1163px;top:747px;width:13px;height:1px;background:#404040;"></div><div class="b" style="left:1163px;top:747px;width:1px;height:134px;background:#404040;"></div><div class="b" style="left:1162px;top:881px;width:15px;height:1px;background:#ffffff;"></div><div class="b" style="left:1176px;top:746px;width:1px;height:136px;background:#ffffff;"></div><div class="b" style="left:1161px;top:809px;width:18px;height:9px;background:#d4d0c8;"></div><div class="b" style="left:1161px;top:809px;width:18px;height:1px;background:#ffffff;"></div><div class="b" style="left:1161px;top:809px;width:1px;height:9px;background:#ffffff;"></div><div class="b" style="left:1161px;top:817px;width:18px;height:1px;background:#404040;"></div><div class="b" style="left:1178px;top:809px;width:1px;height:9px;background:#404040;"></div><div class="b" style="left:1162px;top:816px;width:16px;height:1px;background:#808080;"></div><div class="b" style="left:1177px;top:810px;width:1px;height:7px;background:#808080;"></div><div class="b" style="left:1183px;top:750px;width:4px;height:1px;background:#000;"></div><div class="b" style="left:1183px;top:782px;width:4px;height:1px;background:#000;"></div><div class="b" style="left:1183px;top:814px;width:4px;height:1px;background:#000;"></div><div class="b" style="left:1183px;top:845px;width:4px;height:1px;background:#000;"></div><div class="b" style="left:1183px;top:877px;width:4px;height:1px;background:#000;"></div><div class="b" style="left:3px;top:893px;width:1218px;height:19px;background:#d4d0c8;"></div><div class="b" style="left:49px;top:892px;width:40px;height:1px;background:#404040;"></div><div class="b" style="left:48px;top:893px;width:1px;height:17px;background:#ffffff;"></div><div class="b" style="left:88px;top:893px;width:1px;height:17px;background:#404040;"></div><div class="b" style="left:87px;top:893px;width:1px;height:17px;background:#808080;"></div><div class="b" style="left:50px;top:910px;width:38px;height:1px;background:#404040;"></div><div class="b" style="left:49px;top:909px;width:39px;height:1px;background:#808080;"></div><div class="t" style="left:54px;top:896.52px;font-size:11.2px;line-height:11.2px;font-family:'Liberation Sans', sans-serif;color:#000;">Map</div><div class="b" style="left:90px;top:892px;width:41px;height:1px;background:#404040;"></div><div class="b" style="left:89px;top:893px;width:1px;height:17px;background:#ffffff;"></div><div class="b" style="left:130px;top:893px;width:1px;height:17px;background:#404040;"></div><div class="b" style="left:129px;top:893px;width:1px;height:17px;background:#808080;"></div><div class="b" style="left:91px;top:910px;width:39px;height:1px;background:#404040;"></div><div class="b" style="left:90px;top:909px;width:40px;height:1px;background:#808080;"></div><div class="t" style="left:95px;top:896.52px;font-size:11.2px;line-height:11.2px;font-family:'Liberation Sans', sans-serif;color:#000;">HEX</div><div class="b" style="left:132px;top:892px;width:54px;height:1px;background:#404040;"></div><div class="b" style="left:131px;top:893px;width:1px;height:17px;background:#ffffff;"></div><div class="b" style="left:185px;top:893px;width:1px;height:17px;background:#404040;"></div><div class="b" style="left:184px;top:893px;width:1px;height:17px;background:#808080;"></div><div class="b" style="left:133px;top:910px;width:52px;height:1px;background:#404040;"></div><div class="b" style="left:132px;top:909px;width:53px;height:1px;background:#808080;"></div><div class="t" style="left:137px;top:896.52px;font-size:11.2px;line-height:11.2px;font-family:'Liberation Sans', sans-serif;color:#000;">Structure</div><div class="b" style="left:187px;top:892px;width:41px;height:1px;background:#404040;"></div><div class="b" style="left:186px;top:893px;width:1px;height:17px;background:#ffffff;"></div><div class="b" style="left:227px;top:893px;width:1px;height:17px;background:#404040;"></div><div class="b" style="left:226px;top:893px;width:1px;height:17px;background:#808080;"></div><div class="b" style="left:188px;top:910px;width:39px;height:1px;background:#404040;"></div><div class="b" style="left:187px;top:909px;width:40px;height:1px;background:#808080;"></div><div class="t" style="left:192px;top:896.52px;font-size:11.2px;line-height:11.2px;font-family:'Liberation Sans', sans-serif;color:#000;">Status</div><div class="b" style="left:229px;top:892px;width:60px;height:1px;background:#404040;"></div><div class="b" style="left:228px;top:893px;width:1px;height:17px;background:#ffffff;"></div><div class="b" style="left:288px;top:893px;width:1px;height:17px;background:#404040;"></div><div class="b" style="left:287px;top:893px;width:1px;height:17px;background:#808080;"></div><div class="b" style="left:230px;top:910px;width:58px;height:1px;background:#404040;"></div><div class="b" style="left:229px;top:909px;width:59px;height:1px;background:#808080;"></div><div class="t" style="left:234px;top:896.52px;font-size:11.2px;line-height:11.2px;font-family:'Liberation Sans', sans-serif;color:#000;">Processes</div><div class="b" style="left:4px;top:892px;width:43px;height:19px;background:#d4d0c8;"></div><div class="b" style="left:3px;top:892px;width:1px;height:19px;background:#ffffff;"></div><div class="b" style="left:46px;top:892px;width:1px;height:19px;background:#404040;"></div><div class="b" style="left:5px;top:911px;width:42px;height:1px;background:#404040;"></div><div class="b" style="left:4px;top:910px;width:42px;height:1px;background:#808080;"></div><div class="b" style="left:6px;top:894px;width:40px;height:16px;outline:1px dotted #000;outline-offset:-1px;"></div><div class="t" style="left:12px;top:898.77px;font-size:11.5px;line-height:11.5px;font-family:'Liberation Sans', sans-serif;color:#000;">Log</div><div class="b" style="left:3px;top:913px;width:1218px;height:1px;background:#808080;"></div><div class="b" style="left:3px;top:913px;width:1px;height:8px;background:#808080;"></div><div class="b" style="left:3px;top:921px;width:1218px;height:1px;background:#ffffff;"></div><div class="b" style="left:1220px;top:913px;width:1px;height:9px;background:#ffffff;"></div><div class="b" style="left:3px;top:932px;width:325px;height:1px;background:#808080;"></div><div class="b" style="left:4px;top:933px;width:324px;height:1px;background:#ffffff;"></div><div class="b" style="left:3px;top:932px;width:1px;height:43px;background:#808080;"></div><div class="b" style="left:4px;top:933px;width:1px;height:42px;background:#ffffff;"></div><div class="b" style="left:3px;top:974px;width:325px;height:1px;background:#808080;"></div><div class="b" style="left:3px;top:975px;width:326px;height:1px;background:#ffffff;"></div><div class="b" style="left:327px;top:932px;width:1px;height:43px;background:#808080;"></div><div class="b" style="left:328px;top:932px;width:1px;height:44px;background:#ffffff;"></div><div class="b" style="left:6px;top:925px;width:220px;height:12px;background:#d4d0c8;"></div><div class="t" style="left:7px;top:925.59px;font-size:12.3px;line-height:12.3px;font-family:'Liberation Sans', sans-serif;color:#000;letter-spacing:0.15px;">Status register (PATA0)-[PIO4+IORDY]</div><div class="b" style="left:11px;top:941px;width:22px;height:12px;background:#c6c6c6;box-shadow:inset 0 0 0 1px #888888;"></div><div class="t" style="left:2.0px;width:40px;text-align:center;top:956.59px;font-size:12.3px;line-height:12.3px;font-family:'Liberation Sans', sans-serif;color:#17386a;letter-spacing:-0.6px;">BSY</div><div class="b" style="left:51px;top:941px;width:22px;height:12px;background:#00f000;box-shadow:inset 0 0 0 1px #3c8c3c;"></div><div class="t" style="left:42.0px;width:40px;text-align:center;top:956.59px;font-size:12.3px;line-height:12.3px;font-family:'Liberation Sans', sans-serif;color:#17386a;letter-spacing:-0.6px;">DRD</div><div class="b" style="left:91px;top:941px;width:22px;height:12px;background:#c6c6c6;box-shadow:inset 0 0 0 1px #888888;"></div><div class="t" style="left:82.0px;width:40px;text-align:center;top:956.59px;font-size:12.3px;line-height:12.3px;font-family:'Liberation Sans', sans-serif;color:#17386a;letter-spacing:-0.6px;">DWF</div><div class="b" style="left:131px;top:941px;width:22px;height:12px;background:#00f000;box-shadow:inset 0 0 0 1px #3c8c3c;"></div><div class="t" style="left:122.0px;width:40px;text-align:center;top:956.59px;font-size:12.3px;line-height:12.3px;font-family:'Liberation Sans', sans-serif;color:#17386a;letter-spacing:-0.6px;">DSC</div><div class="b" style="left:171px;top:941px;width:22px;height:12px;background:#c6c6c6;box-shadow:inset 0 0 0 1px #888888;"></div><div class="t" style="left:162.0px;width:40px;text-align:center;top:956.59px;font-size:12.3px;line-height:12.3px;font-family:'Liberation Sans', sans-serif;color:#17386a;letter-spacing:-0.6px;">DRQ</div><div class="b" style="left:211px;top:941px;width:22px;height:12px;background:#c6c6c6;box-shadow:inset 0 0 0 1px #888888;"></div><div class="t" style="left:202.0px;width:40px;text-align:center;top:956.59px;font-size:12.3px;line-height:12.3px;font-family:'Liberation Sans', sans-serif;color:#17386a;letter-spacing:-0.6px;">CRR</div><div class="b" style="left:251px;top:941px;width:22px;height:12px;background:#c6c6c6;box-shadow:inset 0 0 0 1px #888888;"></div><div class="t" style="left:242.0px;width:40px;text-align:center;top:956.59px;font-size:12.3px;line-height:12.3px;font-family:'Liberation Sans', sans-serif;color:#17386a;letter-spacing:-0.6px;">IDX</div><div class="b" style="left:291px;top:941px;width:22px;height:12px;background:#c6c6c6;box-shadow:inset 0 0 0 1px #888888;"></div><div class="t" style="left:282.0px;width:40px;text-align:center;top:956.59px;font-size:12.3px;line-height:12.3px;font-family:'Liberation Sans', sans-serif;color:#17386a;letter-spacing:-0.6px;">ERR</div><div class="b" style="left:329px;top:932px;width:329px;height:1px;background:#808080;"></div><div class="b" style="left:330px;top:933px;width:328px;height:1px;background:#ffffff;"></div><div class="b" style="left:329px;top:932px;width:1px;height:43px;background:#808080;"></div><div class="b" style="left:330px;top:933px;width:1px;height:42px;background:#ffffff;"></div><div class="b" style="left:329px;top:974px;width:329px;height:1px;background:#808080;"></div><div class="b" style="left:329px;top:975px;width:330px;height:1px;background:#ffffff;"></div><div class="b" style="left:657px;top:932px;width:1px;height:43px;background:#808080;"></div><div class="b" style="left:658px;top:932px;width:1px;height:44px;background:#ffffff;"></div><div class="b" style="left:336px;top:925px;width:126px;height:12px;background:#d4d0c8;"></div><div class="t" style="left:337px;top:925.59px;font-size:12.3px;line-height:12.3px;font-family:'Liberation Sans', sans-serif;color:#000;letter-spacing:0.15px;">Error register (PATA0)</div><div class="b" style="left:341px;top:941px;width:22px;height:12px;background:#c6c6c6;box-shadow:inset 0 0 0 1px #888888;"></div><div class="t" style="left:332.0px;width:40px;text-align:center;top:956.59px;font-size:12.3px;line-height:12.3px;font-family:'Liberation Sans', sans-serif;color:#17386a;letter-spacing:-0.6px;">BBK</div><div class="b" style="left:381px;top:941px;width:22px;height:12px;background:#c6c6c6;box-shadow:inset 0 0 0 1px #888888;"></div><div class="t" style="left:372.0px;width:40px;text-align:center;top:956.59px;font-size:12.3px;line-height:12.3px;font-family:'Liberation Sans', sans-serif;color:#17386a;letter-spacing:-0.6px;">UNC</div><div class="b" style="left:421px;top:941px;width:22px;height:12px;background:#c6c6c6;box-shadow:inset 0 0 0 1px #888888;"></div><div class="b" style="left:461px;top:941px;width:22px;height:12px;background:#c6c6c6;box-shadow:inset 0 0 0 1px #888888;"></div><div class="t" style="left:452.0px;width:40px;text-align:center;top:956.59px;font-size:12.3px;line-height:12.3px;font-family:'Liberation Sans', sans-serif;color:#17386a;letter-spacing:-0.6px;">INF</div><div class="b" style="left:501px;top:941px;width:22px;height:12px;background:#c6c6c6;box-shadow:inset 0 0 0 1px #888888;"></div><div class="b" style="left:541px;top:941px;width:22px;height:12px;background:#c6c6c6;box-shadow:inset 0 0 0 1px #888888;"></div><div class="t" style="left:532.0px;width:40px;text-align:center;top:956.59px;font-size:12.3px;line-height:12.3px;font-family:'Liberation Sans', sans-serif;color:#17386a;letter-spacing:-0.6px;">ABR</div><div class="b" style="left:581px;top:941px;width:22px;height:12px;background:#c6c6c6;box-shadow:inset 0 0 0 1px #888888;"></div><div class="t" style="left:572.0px;width:40px;text-align:center;top:956.59px;font-size:12.3px;line-height:12.3px;font-family:'Liberation Sans', sans-serif;color:#17386a;letter-spacing:-0.6px;">TON</div><div class="b" style="left:621px;top:941px;width:22px;height:12px;background:#c6c6c6;box-shadow:inset 0 0 0 1px #888888;"></div><div class="t" style="left:612.0px;width:40px;text-align:center;top:956.59px;font-size:12.3px;line-height:12.3px;font-family:'Liberation Sans', sans-serif;color:#17386a;letter-spacing:-0.6px;">AMN</div><div class="b" style="left:660px;top:932px;width:51px;height:1px;background:#808080;"></div><div class="b" style="left:661px;top:933px;width:50px;height:1px;background:#ffffff;"></div><div class="b" style="left:660px;top:932px;width:1px;height:43px;background:#808080;"></div><div class="b" style="left:661px;top:933px;width:1px;height:42px;background:#ffffff;"></div><div class="b" style="left:660px;top:974px;width:51px;height:1px;background:#808080;"></div><div class="b" style="left:660px;top:975px;width:52px;height:1px;background:#ffffff;"></div><div class="b" style="left:710px;top:932px;width:1px;height:43px;background:#808080;"></div><div class="b" style="left:711px;top:932px;width:1px;height:44px;background:#ffffff;"></div><div class="b" style="left:666px;top:925px;width:29px;height:12px;background:#d4d0c8;"></div><div class="t" style="left:667px;top:925.59px;font-size:12.3px;line-height:12.3px;font-family:'Liberation Sans', sans-serif;color:#000;letter-spacing:0.15px;">DMA</div><div class="b" style="left:675px;top:941px;width:22px;height:12px;background:#c6c6c6;box-shadow:inset 0 0 0 1px #888888;"></div><div class="t" style="left:666.0px;width:40px;text-align:center;top:956.59px;font-size:12.3px;line-height:12.3px;font-family:'Liberation Sans', sans-serif;color:#17386a;letter-spacing:-0.6px;">RQ</div><div class="b" style="left:1200px;top:932px;width:78px;height:1px;background:#808080;"></div><div class="b" style="left:1201px;top:933px;width:77px;height:1px;background:#ffffff;"></div><div class="b" style="left:1200px;top:932px;width:1px;height:43px;background:#808080;"></div><div class="b" style="left:1201px;top:933px;width:1px;height:42px;background:#ffffff;"></div><div class="b" style="left:1200px;top:974px;width:78px;height:1px;background:#808080;"></div><div class="b" style="left:1200px;top:975px;width:79px;height:1px;background:#ffffff;"></div><div class="b" style="left:1277px;top:932px;width:1px;height:43px;background:#808080;"></div><div class="b" style="left:1278px;top:932px;width:1px;height:44px;background:#ffffff;"></div><div class="b" style="left:1207px;top:925px;width:38px;height:12px;background:#d4d0c8;"></div><div class="t" style="left:1208px;top:925.59px;font-size:12.3px;line-height:12.3px;font-family:'Liberation Sans', sans-serif;color:#000;letter-spacing:0.15px;">Power</div><div class="b" style="left:1210px;top:941px;width:22px;height:12px;background:#00f000;box-shadow:inset 0 0 0 1px #3c8c3c;"></div><div class="t" style="left:1201.0px;width:40px;text-align:center;top:956.59px;font-size:12.3px;line-height:12.3px;font-family:'Liberation Sans', sans-serif;color:#17386a;letter-spacing:-0.6px;">5V</div><div class="b" style="left:1247px;top:941px;width:22px;height:12px;background:#00f000;box-shadow:inset 0 0 0 1px #3c8c3c;"></div><div class="t" style="left:1238.0px;width:40px;text-align:center;top:956.59px;font-size:12.3px;line-height:12.3px;font-family:'Liberation Sans', sans-serif;color:#17386a;letter-spacing:-0.6px;">12V</div><div class="b" style="left:0px;top:977px;width:1279px;height:1px;background:#ffffff;"></div><div class="b" style="left:1228px;top:62px;width:1px;height:864px;background:#808080;"></div><div class="b" style="left:1229px;top:62px;width:1px;height:864px;background:#ffffff;"></div><div class="b" style="left:1173px;top:447px;width:1px;height:281px;background:#808080;"></div><div class="b" style="left:1174px;top:447px;width:1px;height:281px;background:#ffffff;"></div><svg class="s" style="left:1238px;top:66px;" width="30" height="34" viewBox="0 0 30 34" shape-rendering="crispEdges">
<path d="M2.5 10V24c0 1.5 3 2.5 6.5 2.5s6.5-1 6.5-2.5V10" fill="#3ad02a" stroke="#000" stroke-width="1.3" shape-rendering="auto"/>
<ellipse cx="9" cy="9.5" rx="6.5" ry="2.2" fill="#3ad02a" stroke="#000" stroke-width="1.3" shape-rendering="auto"/>
<path d="M12.5 17V30c0 1.5 3 2.5 6.5 2.5s6.5-1 6.5-2.5V17" fill="#d8d4cc" stroke="#000" stroke-width="1.3" shape-rendering="auto"/>
<ellipse cx="19" cy="16.5" rx="6.5" ry="2.2" fill="#d8d4cc" stroke="#000" stroke-width="1.3" shape-rendering="auto"/>
<path d="M11 6c2-3 7-3 10 1" fill="none" stroke="#000" stroke-width="1.3" shape-rendering="auto"/>
<path d="M27 3v8h-7z" fill="#000"/>
</svg><svg class="s" style="left:1240px;top:108px;" width="28" height="30" viewBox="0 0 28 30" shape-rendering="crispEdges">
<path d="M6 3h1v4H6z M5 4h1v1H5z" fill="#000"/>
<path d="M11 5h1v6h-1z M9 9h5v1H9z M10 10h3v1h-3z M11 11h1v1h-1z" fill="#000"/>
<rect x="3.5" y="12.5" width="19" height="8" fill="#fff" stroke="#000" stroke-width="1"/>
<path d="M9 12h1v9H9z M15 12h1v9h-1z M21 12h3v1h-3z M21 20h3v1h-3z" fill="#000"/>
<rect x="5.5" y="14.5" width="2" height="4" fill="none" stroke="#000" stroke-width="1"/><rect x="11.5" y="14.5" width="2" height="4" fill="none" stroke="#000" stroke-width="1"/><rect x="17.5" y="14.5" width="2" height="4" fill="none" stroke="#000" stroke-width="1"/>
<text x="13.5" y="28" font-family="'Liberation Sans',sans-serif" font-weight="bold" font-size="7.6" text-anchor="middle" fill="#000" textLength="19" lengthAdjust="spacingAndGlyphs">RESET</text>
</svg><svg class="s" style="left:1240px;top:147px;" width="28" height="30" viewBox="0 0 28 30" shape-rendering="crispEdges">
<rect x="9.5" y="3.5" width="7" height="16" rx="3.5" fill="none" stroke="#000" stroke-width="3" shape-rendering="auto"/>
<path d="M1.5 7.5L6 11.5 1.5 15.5z M24.5 7.5L20 11.5 24.5 15.5z" fill="#d4d0c8" stroke="#000" stroke-width="1" shape-rendering="auto"/>
<path d="M4 26h20v2H4z M4 22h1v4H4z M8 23h1v3H8z M12 23h1v3h-1z M16 23h1v3h-1z M20 23h1v3h-1z M23 22h1v4h-1z" fill="#000"/>
</svg><svg class="s" style="left:1240px;top:187px;" width="28" height="28" viewBox="0 0 28 28" shape-rendering="crispEdges">
<path d="M18 1h1v3h-1z M16 4h5v9h-5z" fill="#000"/><path d="M17 5h3v7h-3z" fill="#d4d0c8"/>
<path d="M18 13h1v3h-1z M11 16h16v1H11z M17 15h3v3h-3z M18 18h1v3h-1z M14 19h9v1h-9z M14 21h9v1h-9z M18 22h1v4h-1z M15 26h7v1h-7z" fill="#000"/>
<path d="M1 26h6v1H1z M3 19h1v8H3z M3 19h4v1H3z" fill="#000"/><path d="M6.5 19.5L11 15.5" stroke="#000" stroke-width="1" shape-rendering="auto"/>
</svg><div class="b" style="left:1249px;top:235px;width:3px;height:11px;background:#000;"></div><div class="b" style="left:1254px;top:235px;width:3px;height:11px;background:#000;"></div><svg class="s" style="left:1240px;top:266px;" width="28" height="22" viewBox="0 0 28 22" shape-rendering="crispEdges">
<path d="M7 3h6v1H7z M7 3h1v5H7z M14 1h1v1h-1z M18 1h1v1h-1z M15 2h3v3h-3z M14 5h1v1h-1z M18 5h1v1h-1z M18 3h4v1h-4z M21 3h1v6h-1z M19 8h5v1h-5z M20 9h3v1h-3z M21 10h1v1h-1z" fill="#000"/>
<rect x="1.5" y="11.5" width="3" height="5" fill="none" stroke="#000" stroke-width="1"/>
<rect x="6.5" y="11.5" width="3" height="5" fill="none" stroke="#000" stroke-width="1"/>
<rect x="11.5" y="11.5" width="3" height="5" fill="none" stroke="#000" stroke-width="1"/>
<path d="M17 10h1v9h-1z" fill="#000"/>
<rect x="20.5" y="11.5" width="3" height="5" fill="none" stroke="#000" stroke-width="1"/>
</svg><svg class="s" style="left:1240px;top:304px;" width="28" height="28" viewBox="0 0 28 28" shape-rendering="crispEdges">
<path d="M1 9h3v1H1z M1 11h3v1H1z M1 13h3v1H1z M1 15h3v1H1z M1 17h3v1H1z" fill="#000"/>
<rect x="4.5" y="7.5" width="9" height="12" fill="#d4d0c8" stroke="#000" stroke-width="1.2"/>
<rect x="7.5" y="10.5" width="9" height="12" fill="#d4d0c8" stroke="#000" stroke-width="1.2"/>
<rect x="10.5" y="13.5" width="10" height="13" fill="#d4d0c8" stroke="#000" stroke-width="1.2"/>
<path d="M19 21h3v3h-3z M22 22h2v1h-2z" fill="#000"/>
<path d="M18 2h2v1h2V2h2v2h-1v2h1v2h-2V7h-2v1h-2V6h1V4h-1z" fill="#000"/>
</svg><svg class="s" style="left:1238px;top:348px;" width="30" height="18" viewBox="0 0 30 18" shape-rendering="crispEdges">
<path d="M1 4h20v2H1z M1 9h20v2H1z M7 2h7v11H7z M8 1h1v1H8z M11 1h1v1h-1z" fill="#000"/>
<path d="M10 6h2v3h-2z" fill="#d4d0c8"/>
<path d="M14 3h9v1h-9z M14 12h9v1h-9z M14 7h9v1h-9z M23 2h2v13h-2z" fill="#000"/>
</svg><div class="b" style="left:1232px;top:377px;width:43px;height:39px;background:#d4d0c8;"></div><div class="b" style="left:1232px;top:377px;width:42px;height:1px;background:#808080;"></div><div class="b" style="left:1232px;top:377px;width:1px;height:38px;background:#808080;"></div><div class="b" style="left:1232px;top:415px;width:43px;height:1px;background:#ffffff;"></div><div class="b" style="left:1274px;top:377px;width:1px;height:39px;background:#ffffff;"></div><div class="t" style="left:1251px;top:384.96px;font-size:9.5px;line-height:9.5px;font-family:'Liberation Sans', sans-serif;color:#0000b0;letter-spacing:-0.4px;">Hd 0</div><svg class="s" style="left:1238px;top:394px;" width="32" height="12" viewBox="0 0 32 12" shape-rendering="crispEdges">
<path d="M1 1h8v1H1z" fill="#000"/><rect x="6" y="1" width="5" height="4" fill="#0000e0"/>
<path d="M3 7h27v2H3z M12 5h9v6h-9z" fill="#000"/><path d="M13 4h1v1h-1z M16 4h1v1h-1z M19 4h1v1h-1z" fill="#000"/>
</svg><div class="b" style="left:1232px;top:416px;width:43px;height:39px;background:#d4d0c8;"></div><div class="b" style="left:1232px;top:416px;width:42px;height:1px;background:#808080;"></div><div class="b" style="left:1232px;top:416px;width:1px;height:38px;background:#808080;"></div><div class="b" style="left:1232px;top:454px;width:43px;height:1px;background:#ffffff;"></div><div class="b" style="left:1274px;top:416px;width:1px;height:39px;background:#ffffff;"></div><div class="t" style="left:1251px;top:423.96px;font-size:9.5px;line-height:9.5px;font-family:'Liberation Sans', sans-serif;color:#0000b0;letter-spacing:-0.4px;">Hd 1</div><svg class="s" style="left:1238px;top:433px;" width="32" height="12" viewBox="0 0 32 12" shape-rendering="crispEdges">
<path d="M1 1h8v1H1z" fill="#000"/><rect x="6" y="1" width="5" height="4" fill="#0000e0"/>
<path d="M3 7h27v2H3z M12 5h9v6h-9z" fill="#000"/><path d="M13 4h1v1h-1z M16 4h1v1h-1z M19 4h1v1h-1z" fill="#000"/>
</svg><div class="b" style="left:1232px;top:455px;width:43px;height:39px;background:#d4d0c8;"></div><div class="b" style="left:1232px;top:455px;width:42px;height:1px;background:#808080;"></div><div class="b" style="left:1232px;top:455px;width:1px;height:38px;background:#808080;"></div><div class="b" style="left:1232px;top:493px;width:43px;height:1px;background:#ffffff;"></div><div class="b" style="left:1274px;top:455px;width:1px;height:39px;background:#ffffff;"></div><div class="t" style="left:1251px;top:462.96px;font-size:9.5px;line-height:9.5px;font-family:'Liberation Sans', sans-serif;color:#0000b0;letter-spacing:-0.4px;">Hd 2</div><svg class="s" style="left:1238px;top:472px;" width="32" height="12" viewBox="0 0 32 12" shape-rendering="crispEdges">
<path d="M1 1h8v1H1z" fill="#000"/><rect x="6" y="1" width="5" height="4" fill="#0000e0"/>
<path d="M3 7h27v2H3z M12 5h9v6h-9z" fill="#000"/><path d="M13 4h1v1h-1z M16 4h1v1h-1z M19 4h1v1h-1z" fill="#000"/>
</svg><div class="b" style="left:1232px;top:494px;width:43px;height:39px;background:#d4d0c8;"></div><div class="b" style="left:1232px;top:494px;width:42px;height:1px;background:#808080;"></div><div class="b" style="left:1232px;top:494px;width:1px;height:38px;background:#808080;"></div><div class="b" style="left:1232px;top:532px;width:43px;height:1px;background:#ffffff;"></div><div class="b" style="left:1274px;top:494px;width:1px;height:39px;background:#ffffff;"></div><div class="t" style="left:1251px;top:501.96px;font-size:9.5px;line-height:9.5px;font-family:'Liberation Sans', sans-serif;color:#0000b0;letter-spacing:-0.4px;">Hd 3</div><svg class="s" style="left:1238px;top:511px;" width="32" height="12" viewBox="0 0 32 12" shape-rendering="crispEdges">
<path d="M1 1h8v1H1z" fill="#000"/><rect x="6" y="1" width="5" height="4" fill="#0000e0"/>
<path d="M3 7h27v2H3z M12 5h9v6h-9z" fill="#000"/><path d="M13 4h1v1h-1z M16 4h1v1h-1z M19 4h1v1h-1z" fill="#000"/>
</svg><svg class="s" style="left:1180px;top:450px;" width="22" height="19" viewBox="0 0 22 19" shape-rendering="crispEdges">
<path d="M3.5 0.5H12.5V17.5H0.5V3.5z" fill="#d4d0c8" stroke="#000" stroke-width="1.2" shape-rendering="auto"/>
<path d="M0.5 3.5H3.5V0.5" fill="none" stroke="#000" stroke-width="1" shape-rendering="auto"/>
<polygon points="20.60,11.51 18.66,12.61 18.39,14.82 16.24,14.23 14.49,15.60 13.39,13.66 11.18,13.39 11.77,11.24 10.40,9.49 12.34,8.39 12.61,6.18 14.76,6.77 16.51,5.40 17.61,7.34 19.82,7.61 19.23,9.76" fill="#d4d0c8" stroke="#000" stroke-width="1.2" stroke-dasharray="1.6 0.6" shape-rendering="auto"/>
</svg><svg class="s" style="left:1183px;top:480px;" width="17" height="16" viewBox="0 0 17 16" shape-rendering="crispEdges">
<path d="M1.5 0.5H14.5L15.5 1.5V13.5L14.5 14.5H1.5L0.5 13.5V1.5z" fill="#d4d0c8" stroke="#000" stroke-width="1.2" shape-rendering="auto"/>
<path d="M3.5 0.5V6.5H12.5V0.5" fill="none" stroke="#000" stroke-width="1.2" shape-rendering="auto"/>
<path d="M4 10h8v5h-8z" fill="#000"/><path d="M5 11h2v3H5z M9 11h2v3H9z" fill="#d4d0c8"/>
</svg><svg class="s" style="left:1179px;top:476px;" width="12" height="12" viewBox="0 0 12 12" shape-rendering="crispEdges"><path d="M1 4L4 1 7 4 8 3H9V9H3V8L4 7z" fill="#d4d0c8" stroke="#000" stroke-width="1.1" shape-rendering="auto"/></svg><svg class="s" style="left:1179px;top:505px;" width="22" height="15" viewBox="0 0 22 15" shape-rendering="crispEdges">
<path d="M3.5 4.5V2.5L5.5 0.5H10.5L11.5 1.5H19.5V13.5" fill="none" stroke="#000" stroke-width="1.2" shape-rendering="auto"/>
<path d="M0.5 5.5H17.5L19.5 13.5H2.5z" fill="#d4d0c8" stroke="#000" stroke-width="1.2" shape-rendering="auto"/>
</svg><svg class="s" style="left:1208px;top:512px;" width="6" height="3" viewBox="0 0 6 3" shape-rendering="crispEdges"><path d="M0 0h6v1H5v1H4v1H2V2H1V1H0z" fill="#000"/></svg><svg class="s" style="left:1182px;top:528px;" width="16" height="20" viewBox="0 0 16 20" shape-rendering="crispEdges"><path d="M3.5 0.5H13.5V17.5H0.5V3.5z M0.5 3.5H3.5V0.5" fill="#d4d0c8" stroke="#000" stroke-width="1.2" shape-rendering="auto"/></svg><svg class="s" style="left:1191px;top:742px;" width="22" height="19" viewBox="0 0 22 19" shape-rendering="crispEdges">
<path d="M3.5 0.5H12.5V17.5H0.5V3.5z" fill="#d4d0c8" stroke="#000" stroke-width="1.2" shape-rendering="auto"/>
<path d="M0.5 3.5H3.5V0.5" fill="none" stroke="#000" stroke-width="1" shape-rendering="auto"/>
<polygon points="20.60,11.51 18.66,12.61 18.39,14.82 16.24,14.23 14.49,15.60 13.39,13.66 11.18,13.39 11.77,11.24 10.40,9.49 12.34,8.39 12.61,6.18 14.76,6.77 16.51,5.40 17.61,7.34 19.82,7.61 19.23,9.76" fill="#d4d0c8" stroke="#000" stroke-width="1.2" stroke-dasharray="1.6 0.6" shape-rendering="auto"/>
</svg><svg class="s" style="left:1193px;top:772px;" width="17" height="16" viewBox="0 0 17 16" shape-rendering="crispEdges">
<path d="M1.5 0.5H14.5L15.5 1.5V13.5L14.5 14.5H1.5L0.5 13.5V1.5z" fill="#d4d0c8" stroke="#000" stroke-width="1.2" shape-rendering="auto"/>
<path d="M3.5 0.5V6.5H12.5V0.5" fill="none" stroke="#000" stroke-width="1.2" shape-rendering="auto"/>
<path d="M4 10h8v5h-8z" fill="#000"/><path d="M5 11h2v3H5z M9 11h2v3H9z" fill="#d4d0c8"/>
</svg><div class="b" style="left:1196px;top:801px;width:3px;height:11px;background:#000;"></div><div class="b" style="left:1201px;top:801px;width:3px;height:11px;background:#000;"></div><svg class="s" style="left:1193px;top:826px;" width="17" height="16" viewBox="0 0 17 16" shape-rendering="crispEdges">
<path d="M1.5 0.5H14.5L15.5 1.5V13.5L14.5 14.5H1.5L0.5 13.5V1.5z" fill="#d4d0c8" stroke="#000" stroke-width="1.2" shape-rendering="auto"/>
<path d="M3.5 0.5V6.5H12.5V0.5" fill="none" stroke="#000" stroke-width="1.2" shape-rendering="auto"/>
<path d="M4 10h8v5h-8z" fill="#000"/><path d="M5 11h2v3H5z M9 11h2v3H9z" fill="#d4d0c8"/>
</svg><svg class="s" style="left:1189px;top:821px;" width="12" height="12" viewBox="0 0 12 12" shape-rendering="crispEdges"><path d="M1 4L4 1 7 4 8 3H9V9H3V8L4 7z" fill="#d4d0c8" stroke="#000" stroke-width="1.1" shape-rendering="auto"/></svg></body></html>
